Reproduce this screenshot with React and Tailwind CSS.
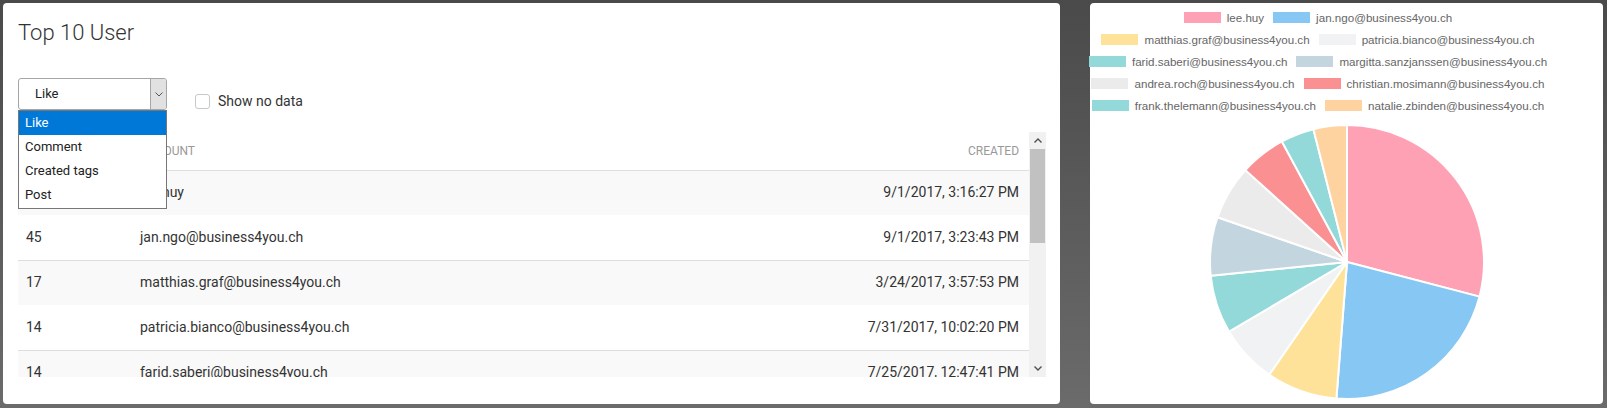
import React from "react";

const rows = [
  { count: 59, account: "lee.huy", created: "9/1/2017, 3:16:27 PM" },
  { count: 45, account: "jan.ngo@business4you.ch", created: "9/1/2017, 3:23:43 PM" },
  { count: 17, account: "matthias.graf@business4you.ch", created: "3/24/2017, 3:57:53 PM" },
  { count: 14, account: "patricia.bianco@business4you.ch", created: "7/31/2017, 10:02:20 PM" },
  { count: 14, account: "farid.saberi@business4you.ch", created: "7/25/2017, 12:47:41 PM" },
  { count: 14, account: "margitta.sanzjanssen@business4you.ch", created: "6/12/2017, 9:14:05 AM" },
];

const slices = [
  { label: "lee.huy", value: 59, color: "#ffa1b5" },
  { label: "jan.ngo@business4you.ch", value: 45, color: "#86c7f3" },
  { label: "matthias.graf@business4you.ch", value: 17, color: "#ffe29a" },
  { label: "patricia.bianco@business4you.ch", value: 14, color: "#f0f2f4" },
  { label: "farid.saberi@business4you.ch", value: 14, color: "#93d9d9" },
  { label: "margitta.sanzjanssen@business4you.ch", value: 14, color: "#c3d6e0" },
  { label: "andrea.roch@business4you.ch", value: 13, color: "#ebebeb" },
  { label: "christian.mosimann@business4you.ch", value: 11, color: "#fa9092" },
  { label: "frank.thelemann@business4you.ch", value: 8, color: "#93d9d9" },
  { label: "natalie.zbinden@business4you.ch", value: 8, color: "#ffd3a0" },
];

const options = ["Like", "Comment", "Created tags", "Post"];

const Pie = () => {
  const cx = 139;
  const cy = 139;
  const r = 137;
  const total = slices.reduce((s, d) => s + d.value, 0);
  let acc = 0;
  return (
    <svg width="278" height="278" viewBox="0 0 278 278">
      {slices.map((d) => {
        const a0 = (acc / total) * Math.PI * 2;
        acc += d.value;
        const a1 = (acc / total) * Math.PI * 2;
        const x0 = cx + r * Math.sin(a0);
        const y0 = cy - r * Math.cos(a0);
        const x1 = cx + r * Math.sin(a1);
        const y1 = cy - r * Math.cos(a1);
        const large = a1 - a0 > Math.PI ? 1 : 0;
        return (
          <path
            key={d.label}
            d={`M${cx} ${cy} L${x0} ${y0} A${r} ${r} 0 ${large} 1 ${x1} ${y1} Z`}
            fill={d.color}
            stroke="#fff"
            strokeWidth="2"
            strokeLinejoin="round"
          />
        );
      })}
    </svg>
  );
};

const LegendItem = ({ item }) => (
  <div className="flex items-center gap-[6px]">
    <span className="w-[37px] h-[11px]" style={{ backgroundColor: item.color }} />
    <span className="whitespace-nowrap">{item.label}</span>
  </div>
);

export default function App() {
  const legendRows = [0, 2, 4, 6, 8].map((i) => [slices[i], slices[i + 1]]);

  return (
    <div className="h-[408px] w-full flex gap-[30px] pt-[3px] pb-[4px] pl-[3px] pr-[4px] bg-linear-to-b from-[#4a4a4a] to-[#6b6b6b] font-['Roboto',sans-serif]">
      {/* left card */}
      <div className="w-[1057px] shrink-0 bg-white rounded-[4px] flex flex-col pt-[16px] pl-[15px] pr-[14px]">
        <h1 className="text-[22px] leading-[28px] font-light text-[#333]">Top 10 User</h1>

        <div className="mt-[31px] flex items-start gap-[28px]">
          <div className="relative">
            <div className="w-[149px] h-[32px] border border-[#a6a6a6] rounded-[3px] flex overflow-hidden">
              <div className="flex-1 flex items-center pl-[16px] text-[13px] text-[#222]">Like</div>
              <div className="w-[16px] bg-[#e1e1e1] border-l border-[#a6a6a6] flex items-center justify-center">
                <svg width="8" height="5" viewBox="0 0 8 5">
                  <polyline points="0.5,0.5 4,4 7.5,0.5" fill="none" stroke="#555" strokeWidth="1" />
                </svg>
              </div>
            </div>
            <ul className="absolute left-0 top-[32px] z-10 w-[149px] bg-white border border-[#767676] pb-[1px]">
              {options.map((o, i) => (
                <li
                  key={o}
                  className={
                    i === 0
                      ? "h-[24px] flex items-center pl-[6px] text-[13px] bg-[#0078d7] text-white"
                      : "h-[24px] flex items-center pl-[6px] text-[13px] text-[#222]"
                  }
                >
                  {o}
                </li>
              ))}
            </ul>
          </div>
          <label className="mt-[13px] flex items-center gap-[8px] text-[14px] text-[#333]">
            <span className="w-[15px] h-[15px] border border-[#c8c8c8] rounded-[3px] bg-white" />
            Show no data
          </label>
        </div>

        <div className="mt-[20px] h-[245px] flex overflow-hidden">
          <div className="flex-1 overflow-hidden">
            <table className="w-full table-fixed border-collapse">
              <thead>
                <tr className="h-[38px] border-b border-[#dedede]">
                  <th className="w-[114px] px-[8px] text-left text-[12px] font-normal text-[#999] uppercase">Count</th>
                  <th className="px-[8px] text-left text-[12px] font-normal text-[#999] uppercase">Account</th>
                  <th className="w-[260px] pr-[10px] text-right text-[12px] font-normal text-[#999] uppercase">Created</th>
                </tr>
              </thead>
              <tbody>
                {rows.map((r, i) => (
                  <tr
                    key={r.account}
                    className={
                      i % 2 === 0
                        ? "h-[45px] bg-[#f9f9f9] border-t border-[#dedede]"
                        : "h-[45px] bg-white"
                    }
                  >
                    <td className="px-[8px] text-[14px] text-[#333]">{r.count}</td>
                    <td className="px-[8px] text-[14px] text-[#333]">{r.account}</td>
                    <td className="pr-[10px] text-right text-[14px] text-[#333]">{r.created}</td>
                  </tr>
                ))}
              </tbody>
            </table>
          </div>
          {/* scrollbar */}
          <div className="w-[17px] bg-[#f1f1f1] flex flex-col">
            <div className="h-[17px] flex items-center justify-center">
              <svg width="8" height="5" viewBox="0 0 8 5">
                <polyline points="0.5,4.5 4,1 7.5,4.5" fill="none" stroke="#505050" strokeWidth="1.4" />
              </svg>
            </div>
            <div className="flex-1 px-[1px]">
              <div className="h-[94px] bg-[#c1c1c1]" />
            </div>
            <div className="h-[17px] flex items-center justify-center">
              <svg width="8" height="5" viewBox="0 0 8 5">
                <polyline points="0.5,0.5 4,4 7.5,0.5" fill="none" stroke="#505050" strokeWidth="1.4" />
              </svg>
            </div>
          </div>
        </div>
      </div>

      {/* right card */}
      <div className="flex-1 min-w-0 bg-white rounded-[4px] flex flex-col items-center">
        <div className="self-stretch pt-[4px] pr-[57px] flex flex-col items-center font-['Liberation_Sans',Arial,sans-serif] text-[11.6px] text-[#666]">
          {legendRows.map((pair) => (
            <div key={pair[0].label} className="h-[22px] flex items-center gap-[9px]">
              {pair.map((item) => (
                <LegendItem key={item.label} item={item} />
              ))}
            </div>
          ))}
        </div>
        <div className="mt-[6px]">
          <Pie />
        </div>
      </div>
    </div>
  );
}
